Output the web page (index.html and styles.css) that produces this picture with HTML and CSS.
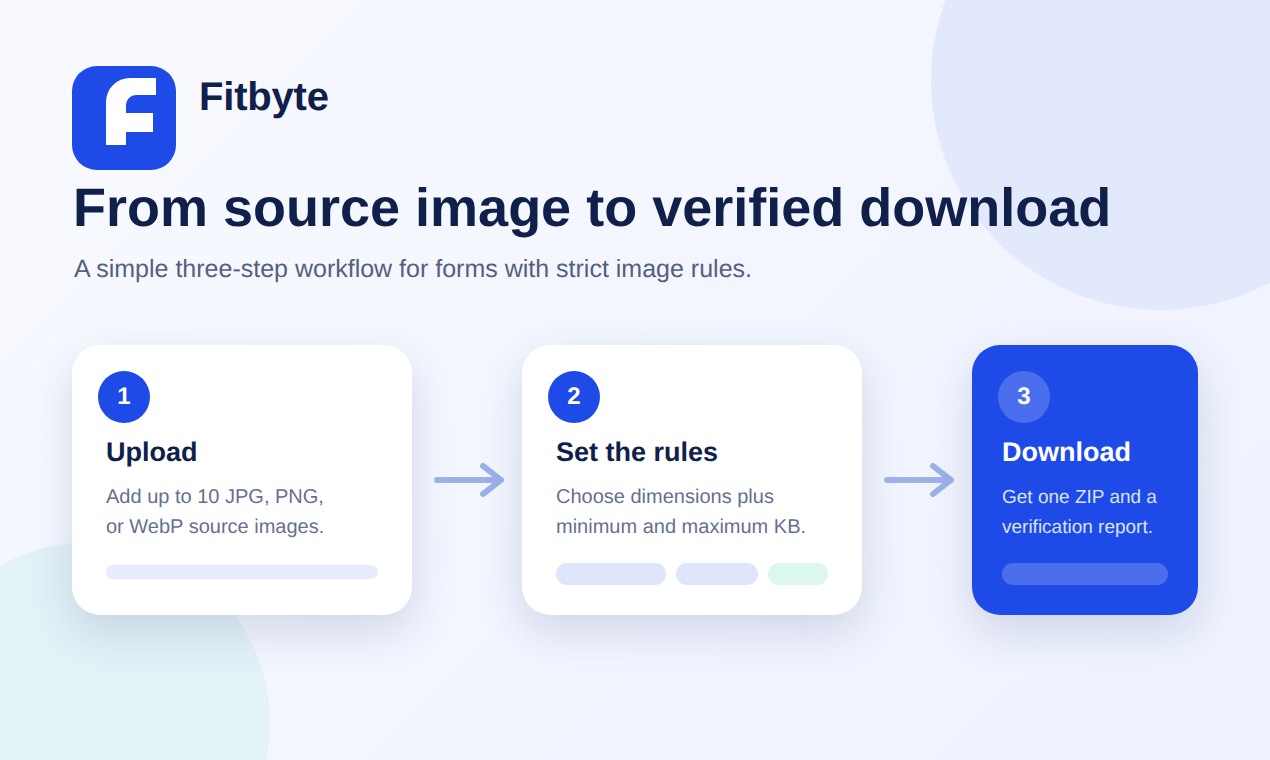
FILE: index.html
```html
<!DOCTYPE html>
<html lang="en">
<head>
    <meta charset="UTF-8">
    <title>Fitbyte - Workflow</title>
    <link rel="stylesheet" href="styles.css">
</head>
<body>
    <div class="blob blob-blue"></div>
    <div class="blob blob-teal"></div>
    <main class="page">
        <header class="brand">
            <svg class="logo" viewBox="0 0 104 104" aria-hidden="true">
                <rect width="104" height="104" rx="25" fill="#1e4ae8"/>
                <path d="M34 79V36A24 24 0 0 1 58 12H84V29H64A10 10 0 0 0 54 39V47H81V66H54V79Z" fill="#fff"/>
            </svg>
            <span class="brand-name">Fitbyte</span>
        </header>
        <h1>From source image to verified download</h1>
        <p class="subtitle">A simple three-step workflow for forms with strict image rules.</p>
        <section class="steps">
            <article class="card">
                <div class="num">1</div>
                <h2>Upload</h2>
                <p>Add up to 10 JPG, PNG,<br>or WebP source images.</p>
                <div class="bars thin"><span class="bar bar-full"></span></div>
            </article>
            <svg class="arrow" viewBox="0 0 70 36" aria-hidden="true">
                <path d="M3 18H67M49 4L67 18L49 32" fill="none" stroke="#9db0e8" stroke-width="6" stroke-linecap="round" stroke-linejoin="round"/>
            </svg>
            <article class="card">
                <div class="num">2</div>
                <h2>Set the rules</h2>
                <p>Choose dimensions plus<br>minimum and maximum KB.</p>
                <div class="bars">
                    <span class="bar bar-a"></span>
                    <span class="bar bar-b"></span>
                    <span class="bar bar-green"></span>
                </div>
            </article>
            <svg class="arrow" viewBox="0 0 70 36" aria-hidden="true">
                <path d="M3 18H67M49 4L67 18L49 32" fill="none" stroke="#9db0e8" stroke-width="6" stroke-linecap="round" stroke-linejoin="round"/>
            </svg>
            <article class="card card-blue">
                <div class="num">3</div>
                <h2>Download</h2>
                <p>Get one ZIP and a<br>verification report.</p>
                <div class="bars"><span class="bar bar-wide"></span></div>
            </article>
        </section>
    </main>
</body>
</html>
```

FILE: styles.css
```css
* {
    margin: 0;
    padding: 0;
    box-sizing: border-box;
}

html {
    overflow: hidden;
}

body {
    position: relative;
    width: 1270px;
    height: 760px;
    overflow: hidden;
    background: linear-gradient(135deg, #f8faff, #eef2fe);
    color: #10204a;
    font-family: "Liberation Sans", Arial, sans-serif;
    text-rendering: geometricPrecision;
}

.blob {
    position: absolute;
    border-radius: 50%;
}

.blob-blue {
    left: 931px;
    top: -150px;
    width: 460px;
    height: 460px;
    background: #e3e9fc;
}

.blob-teal {
    left: -90px;
    top: 542px;
    width: 360px;
    height: 360px;
    background: #e3f2f7;
}

.page {
    position: relative;
    padding: 66px 72px 0;
}

.brand {
    display: flex;
    gap: 23px;
    height: 104px;
}

.logo {
    width: 104px;
    height: 104px;
}

.brand-name {
    font-size: 40px;
    font-weight: 700;
    line-height: 62px;
    letter-spacing: -0.2px;
}

h1 {
    margin: 3px 0 0 1px;
    font-size: 54px;
    font-weight: 700;
    line-height: 70px;
}

.subtitle {
    margin: 9px 0 0 2px;
    font-size: 25px;
    line-height: 34px;
    color: #55607f;
}

.steps {
    display: flex;
    align-items: center;
    margin-top: 59px;
}

.arrow {
    width: 70px;
    height: 36px;
    margin: 0 18px 0 22px;
}

.card {
    width: 340px;
    height: 270px;
    padding: 26px 34px 0;
    background: #fff;
    border-radius: 28px;
    box-shadow: 0 16px 44px rgba(30, 50, 120, 0.16);
}

.num {
    display: flex;
    align-items: center;
    justify-content: center;
    width: 52px;
    height: 52px;
    margin-left: -8px;
    border-radius: 50%;
    background: #1e4ae8;
    color: #fff;
    font-size: 24px;
    font-weight: 700;
}

h2 {
    margin-top: 11px;
    font-size: 27px;
    font-weight: 700;
    line-height: 36px;
}

.card p {
    margin-top: 13px;
    font-size: 20px;
    line-height: 29.5px;
    color: #667090;
}

.bars {
    display: flex;
    gap: 10px;
    margin-top: 21px;
}

.bars.thin {
    margin-top: 23px;
}

.bar {
    height: 22px;
    border-radius: 11px;
}

.bar-full {
    width: 272px;
    height: 14px;
    border-radius: 7px;
    background: #e7edfc;
}

.bar-a {
    width: 110px;
    background: #dfe6fb;
}

.bar-b {
    width: 82px;
    background: #dfe6fb;
}

.bar-green {
    width: 60px;
    background: #dcf7ee;
}

.card-blue {
    width: 226px;
    padding: 26px 30px 0;
    background: #1e4ae8;
    color: #fff;
}

.card-blue .num {
    margin-left: -4px;
    background: #4a6eee;
}

.card-blue p {
    font-size: 19px;
    color: #dbe3fd;
}

.bar-wide {
    width: 166px;
    background: #4c6eed;
}
```
